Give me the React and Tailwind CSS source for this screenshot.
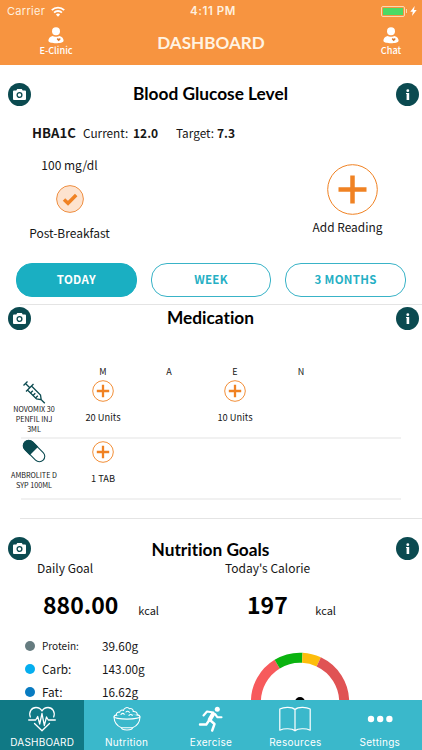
import clsx from 'clsx'

const slots = ['M', 'A', 'E', 'N']

const medications = [
  { name: ['NOVOMIX 30', 'PENFIL INJ', '3ML'], icon: SyringeIcon, doses: { M: '20 Units', E: '10 Units' } },
  { name: ['AMBROLITE D', 'SYP 100ML'], icon: PillIcon, doses: { M: '1 TAB' } },
]

const nutrients = [
  { label: 'Protein:', value: '39.60g', dot: 'bg-[#667c80]', size: 'text-[10px]' },
  { label: 'Carb:', value: '143.00g', dot: 'bg-[#05aeef]', size: 'text-[11.8px]' },
  { label: 'Fat:', value: '16.62g', dot: 'bg-[#087bc1]', size: 'text-[11.8px]' },
]

const tabs = [
  { label: 'DASHBOARD', icon: HeartIcon },
  { label: 'Nutrition', icon: BowlIcon },
  { label: 'Exercise', icon: RunnerIcon },
  { label: 'Resources', icon: BookIcon },
  { label: 'Settings', icon: DotsIcon },
]

function SyringeIcon() {
  return (
    <svg className="w-6 h-6" viewBox="0 0 24 24" fill="none" stroke="#0b4a50" strokeWidth="1.3">
      <path d="M1.500 5.500 5.500 1.500M3.500 3.500 7.500 7.500M4 11.500 11.500 4M5.500 10l9 9 4.700.7-.7-4.700-9-9M19 19.500l3.800 3.800" />
      <path d="M8.500 13l2.300-2.300M11 15.500l2.300-2.300M13.500 18l2.300-2.300" />
    </svg>
  )
}

function PillIcon() {
  return (
    <svg className="w-6 h-6" viewBox="0 0 24 24">
      <g transform="rotate(45 12 12)">
        <rect x="-1" y="6.600" width="26" height="10.800" rx="5.400" fill="#fff" stroke="#0b4a50" strokeWidth="1.100" />
        <path d="M12 6H5a6 6 0 0 0 0 12h7z" fill="#0b4a50" />
      </g>
    </svg>
  )
}

function PersonIcon() {
  return (
    <svg className="w-4 h-[17px]" viewBox="0 0 16 17">
      <circle cx="8" cy="4.300" r="4" fill="#fff" />
      <path d="M4.500 9C6 9.900 10 9.900 11.500 9c2.700.8 4.100 2.500 4.100 4.700C15.600 15.500 11.500 16.200 8 16.200S.4 15.500.4 13.700C.4 11.500 1.800 9.800 4.500 9z" fill="#fff" />
      <path d="M10.700 14.300 9 12.600c-.7-1 .9-2 1.700-.8.8-1.200 2.400-.2 1.700.8z" fill="#d9772c" />
    </svg>
  )
}

function HeartIcon() {
  return (
    <svg className="w-7 h-[26px]" viewBox="0 0 28 26" fill="none" stroke="#fff" strokeWidth="1.300" strokeLinejoin="round" strokeLinecap="round">
      <path d="M2.300 11C.5 6 3.500 1.500 8 1.500c2.800 0 4.800 1.300 6 3.500 1.200-2.200 3.200-3.500 6-3.500 4.500 0 7.500 4.500 5.700 9.500M6.500 17.500 14 24.800l7.500-7.300" />
      <path d="M.7 14h7l2-3.500 2 7.500L14 7.500l2.300 12L18.500 11l1.800 3h7" />
    </svg>
  )
}

function BowlIcon() {
  return (
    <svg className="w-7 h-[26px]" viewBox="0 0 28 26" fill="none" stroke="#fff" strokeWidth="1.100" strokeLinejoin="round" strokeLinecap="round">
      <ellipse cx="14" cy="10.500" rx="13" ry="2.600" />
      <path d="M1 11c.3 5.500 3.500 9.200 7.500 10.800h11c4-1.600 7.200-5.300 7.500-10.800M8.500 21.800c0 1.300 2 2.200 5.500 2.200s5.500-.9 5.500-2.200" />
      <path d="M3.500 9C3 7 5 5.700 6.700 6.200 7 4 9.500 3.700 10.500 4.500c.5-3 4.300-4 6-1.700 2-.8 4 .8 3.700 2.700 2.300-.3 4.300 1 4 3.300" fill="#3ab8cb" />
      <path d="M8 8.500c.7-1.500 2.500-1.500 3.300-.3M13 6c1-1.200 2.800-1 3.300.4M16 9.500c.6-1.300 2.400-1.400 3.300-.2" />
    </svg>
  )
}

function RunnerIcon() {
  return (
    <svg className="w-7 h-[26px]" viewBox="0 0 28 26" fill="none" stroke="#fff" strokeLinejoin="round" strokeLinecap="round">
      <circle cx="20.300" cy="3.200" r="2.500" fill="#fff" stroke="none" />
      <path d="M16 8.200 12.800 13.500" strokeWidth="4.200" />
      <path d="M16.500 6.500 10 5.500 6.500 9.500M18 8l2.500 3.300h4" strokeWidth="2.100" />
      <path d="M12 14.500l-2.700 4H3M13.500 14.500l4 3.500-2.300 6.500" strokeWidth="2.400" />
    </svg>
  )
}

function BookIcon() {
  return (
    <svg className="w-8 h-[26px]" viewBox="0 0 32 26" fill="none" stroke="#fff" strokeWidth="1.200" strokeLinejoin="round">
      <path d="M16 3.500C13 .8 5 .8.800 3v21.200c4.200-2 12.200-2 15.200.6 3-2.600 11-2.600 15.200-.6V3C27 .8 19 .8 16 3.500zM16 3.500v21.300" />
    </svg>
  )
}

function DotsIcon() {
  return (
    <svg className="w-[26px] h-[26px]" viewBox="0 0 26 26" fill="#fff">
      <circle cx="4" cy="13" r="3.200" />
      <circle cx="13.200" cy="13" r="3.200" />
      <circle cx="22.400" cy="13" r="3.200" />
    </svg>
  )
}

function StatusBar() {
  return (
    <div className="h-[22px] flex items-center pl-[7px] pr-[5px] text-[11px] leading-[22px] text-[#fff0df] font-['Inter',sans-serif]">
      <div className="flex-1 flex items-center gap-[6px]">
        <span className="tracking-[0.3px]">Carrier</span>
        <svg className="w-[14px] h-[11px]" viewBox="0 0 14 11" fill="none" stroke="#fff" strokeWidth="1.900">
          <path d="M.8 4.100a9 9 0 0 1 12.400 0M3.100 6.600a5.600 5.600 0 0 1 7.800 0" />
          <path d="M7 10.700 4.900 8.500a3 3 0 0 1 4.200 0z" fill="#fff" stroke="none" />
        </svg>
      </div>
      <span className="text-[11.5px] font-semibold tracking-[0.6px] pl-[2px]">4:11 PM</span>
      <div className="flex-1 flex items-center justify-end">
        <div className="w-6 h-[11px] rounded-[2px] border border-[#fcd9b0] p-px">
          <div className="h-full bg-[#4cd964]" />
        </div>
        <div className="w-px h-1 ml-px bg-[#fcd9b0]" />
        <svg className="w-[7px] h-[10px] ml-[3px]" viewBox="0 0 7 10" fill="#fff">
          <path d="M4.700 0 .3 5.700h2.500L2 10l4.700-5.900H4z" />
        </svg>
      </div>
    </div>
  )
}

function HeaderButton({ label }) {
  return (
    <button className="w-[60px] flex flex-col items-center">
      <PersonIcon />
      <span className="text-[9.2px] leading-[13px] font-medium text-white">{label}</span>
    </button>
  )
}

function SectionTitle({ children, className }) {
  return (
    <div className="h-6 flex items-center pl-2 pr-[3px]">
      <button className="size-[23px] rounded-full bg-[#0b4a50] flex items-center justify-center">
        <svg className="w-[13px] h-[11px]" viewBox="0 0 13 11">
          <path d="M4.200 0h4.600l.9 1.600H12a1 1 0 0 1 1 1V10a1 1 0 0 1-1 1H1a1 1 0 0 1-1-1V2.600a1 1 0 0 1 1-1h2.300z" fill="#fff" />
          <circle cx="6.500" cy="6" r="2.400" fill="#fff" stroke="#0b4a50" strokeWidth="1.300" />
        </svg>
      </button>
      <h2 className={clsx("flex-1 pr-[6px] text-center font-['Lato',sans-serif] font-bold text-[17.3px] leading-6 text-black [font-variant-ligatures:none]", className)}>
        {children}
      </h2>
      <button className="size-[23px] rounded-full bg-[#0b4a50] flex items-center justify-center">
        <svg className="w-[5px] h-[11px]" viewBox="0 0 5 11" fill="#fff">
          <circle cx="2.800" cy="1.700" r="1.400" />
          <path d="M1 4h3.200v7H1.600V5H1z" />
        </svg>
      </button>
    </div>
  )
}

function AddDose() {
  return (
    <svg className="size-[22px]" viewBox="0 0 22 22" fill="none" stroke="#f08223">
      <circle cx="11" cy="11" r="10.300" strokeWidth="0.900" />
      <path d="M11 4.800v12.400M4.800 11h12.400" strokeWidth="2.300" />
    </svg>
  )
}

function BloodGlucose() {
  return (
    <section className="h-[239px] shrink-0 pt-[17px]">
      <SectionTitle>Blood Glucose Level</SectionTitle>
      <div className="mt-[17px] h-5 pl-8 flex items-center text-[12px] leading-5">
        <span className="w-[51px] text-[13.2px] font-bold">HBA1C</span>
        <span className="w-[50px] text-[11.8px]">Current:</span>
        <span className="w-[43px] font-bold">12.0</span>
        <span className="w-[41px] text-[11.8px]">Target:</span>
        <span className="font-bold">7.3</span>
      </div>
      <div className="flex justify-between pl-[9px] pr-[10px] h-[120px]">
        <div className="w-[121px] pt-3 flex flex-col items-center text-[12px] leading-5">
          <span>100 mg/dl</span>
          <svg className="size-7 my-[10px]" viewBox="0 0 28 28">
            <circle cx="14" cy="14" r="13.400" fill="#fde3cf" stroke="#ee8f43" strokeWidth="1" />
            <path d="M8 14.500 12 18.200 20.200 10" fill="none" stroke="#f08223" strokeWidth="3.500" />
          </svg>
          <span>Post-Breakfast</span>
        </div>
        <button className="w-[120px] pt-[21px] flex flex-col items-center text-[11.9px] leading-5">
          <svg className="size-[51px]" viewBox="0 0 51 51" fill="none" stroke="#f08223">
            <circle cx="25.500" cy="25.500" r="24.800" strokeWidth="1" />
            <path d="M25.500 11.500v28M11.500 25.500h28" strokeWidth="4.500" />
          </svg>
          <span className="mt-[2px] mr-[9px]">Add Reading</span>
        </button>
      </div>
      <div className="flex gap-[14px] pl-4 pr-4">
        {['TODAY', 'WEEK', '3 MONTHS'].map((range, i) => (
          <button
            key={range}
            className={clsx(
              'flex-1 h-[34px] pb-[2px] rounded-2xl border text-[11.5px] leading-[30px] font-bold tracking-[0.3px]',
              i === 0 ? 'bg-[#1aafc2] border-[#1aafc2] text-white' : 'border-[#39b3c7] text-[#25afc4]'
            )}
          >
            {range}
          </button>
        ))}
      </div>
    </section>
  )
}

function Medication() {
  return (
    <section className="h-[215px] shrink-0">
      <div className="ml-5 h-px bg-[#e4e4e4]" />
      <div className="pt-px">
        <SectionTitle className="-mt-px">Medication</SectionTitle>
      </div>
      <div className="mt-[34px] h-4 flex pl-[70px] text-[9px] leading-4">
        {slots.map(s => (
          <span key={s} className="w-[66px] text-center">{s}</span>
        ))}
      </div>
      {medications.map((med, i) => (
        <div key={med.name[0]}>
          <div className={clsx('flex', i === 0 ? 'h-[57px]' : 'h-[59px]')}>
            <div className="w-[68px] mr-[2px] flex flex-col items-center text-[7.2px] leading-[10px]">
              <med.icon />
              <div className={clsx('text-center', i === 1 && 'mt-[7px]')}>
                {med.name.map(line => <div key={line}>{line}</div>)}
              </div>
            </div>
            {slots.map(s => (
              <div key={s} className={clsx('w-[66px] flex flex-col items-center', i === 0 ? 'pt-0' : 'pt-[2px]')}>
                {med.doses[s] && (
                  <>
                    <AddDose />
                    <span className={clsx('text-[9.3px] leading-4', i === 0 ? 'mt-[7px]' : 'mt-[7px]')}>{med.doses[s]}</span>
                  </>
                )}
              </div>
            ))}
          </div>
          <div className="ml-[21px] mr-[21px] h-[2px] bg-[#f1f1f1]" />
        </div>
      ))}
      <div className="mt-[18px] ml-5 h-px bg-[#e4e4e4]" />
    </section>
  )
}

function Gauge() {
  return (
    <svg className="w-[100px] h-12" viewBox="0 0 100 48" fill="none" strokeWidth="10">
      <path d="M5.900 60V50A44.200 44.200 0 0 1 27.200 12.100" stroke="#f75a5c" />
      <path d="M27.200 12.100A44.200 44.200 0 0 1 52.300 5.800" stroke="#0ab30f" />
      <path d="M52.300 5.800A44.200 44.200 0 0 1 68.700 9.900" stroke="#fdbd0b" />
      <path d="M68.700 9.900A44.200 44.200 0 0 1 94.200 50V60" stroke="#e05354" />
      <circle cx="50" cy="50" r="5" fill="#000" />
    </svg>
  )
}

function Calories({ label, value, className }) {
  return (
    <div className={className}>
      <div className="text-[12px] leading-5">{label}</div>
      <div className="mt-[10px] h-[34px] flex items-start justify-between">
        <span className="text-[23px] leading-8 font-bold text-black">{value}</span>
        <span className="pt-[12px] text-[11px] leading-5">kcal</span>
      </div>
    </div>
  )
}

function NutritionGoals() {
  return (
    <section className="flex-1 min-h-0 overflow-hidden pt-[17px]">
      <SectionTitle className="pt-1">Nutrition Goals</SectionTitle>
      <div className="-mt-[2px] flex">
        <Calories label={<span className="-ml-[6px]">Daily Goal</span>} value="880.00" className="ml-[43px] w-[116px]" />
        <Calories label={<span className="-ml-[22px]">Today's Calorie</span>} value="197" className="ml-[88px] w-[89px]" />
      </div>
      <div className="flex items-start justify-between pr-[72px]">
        <div className="pt-4 pl-[25px] flex flex-col gap-[7px]">
          {nutrients.map(n => (
            <div key={n.label} className="h-4 flex items-center leading-4">
              <span className={clsx('size-[10px] rounded-full', n.dot)} />
              <span className={clsx('ml-[7px] w-[60px]', n.size)}>{n.label}</span>
              <span className="text-[11.8px]">{n.value}</span>
            </div>
          ))}
        </div>
        <div className="pt-[30px]">
          <Gauge />
        </div>
      </div>
    </section>
  )
}

function TabBar() {
  return (
    <nav className="h-[50px] shrink-0 flex bg-[#3ab8cb]">
      {tabs.map((tab, i) => (
        <button
          key={tab.label}
          className={clsx(
            "flex-1 basis-0 pt-[6px] flex flex-col items-center font-['Inter',sans-serif] text-[10px] leading-[14px] text-white",
            i === 0 && 'bg-[#107985]'
          )}
        >
          <tab.icon />
          <span className={clsx('mt-[3px]', i === 0 ? 'tracking-[0.2px]' : 'tracking-[0.3px]')}>{tab.label}</span>
        </button>
      ))}
    </nav>
  )
}

export default function App() {
  return (
    <div className="w-[422px] h-[750px] flex flex-col overflow-hidden bg-white text-[#161616] whitespace-nowrap font-['Noto_Sans_CJK_SC',sans-serif]">
      <header className="h-[65px] shrink-0 bg-[#f79440]">
        <StatusBar />
        <div className="flex items-start pl-[26px] pr-px pt-[5px]">
          <HeaderButton label="E-Clinic" />
          <h1 className="flex-1 mt-1 pr-[25px] text-center font-['Lato',sans-serif] font-bold text-[17.1px] leading-6 text-[#fff3e2]">DASHBOARD</h1>
          <HeaderButton label="Chat" />
        </div>
      </header>
      <BloodGlucose />
      <Medication />
      <NutritionGoals />
      <TabBar />
    </div>
  )
}
